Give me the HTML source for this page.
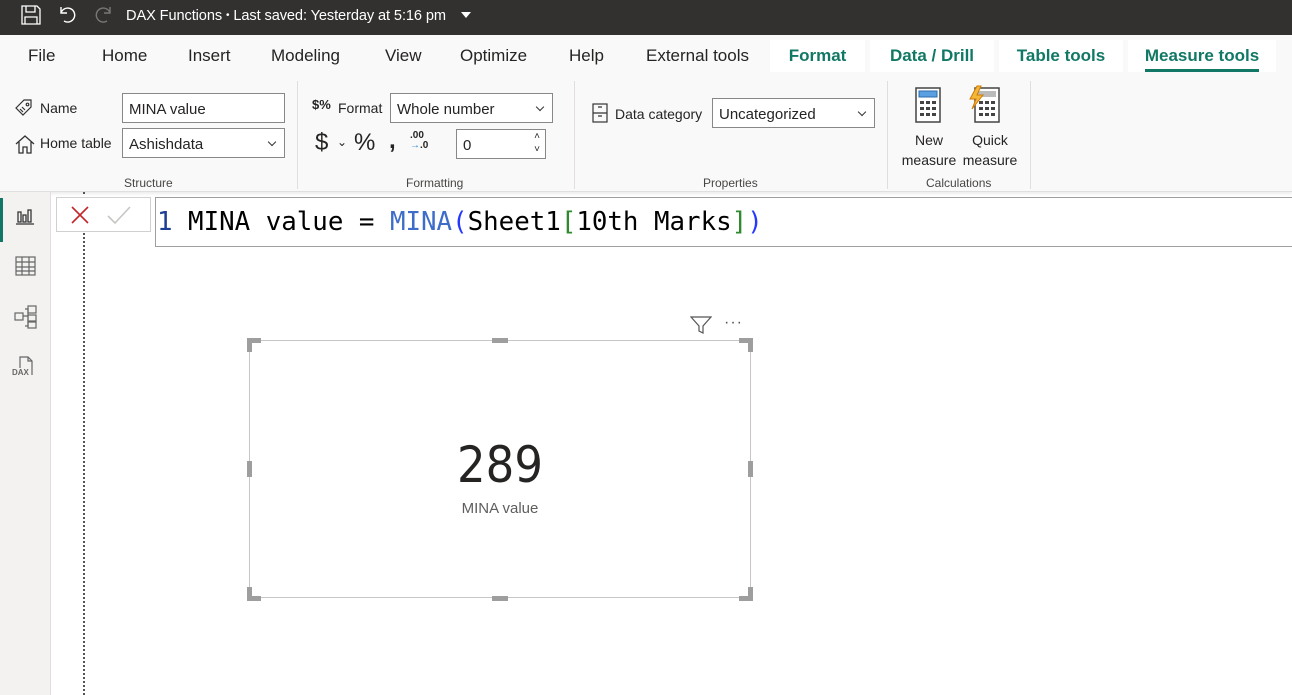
<!DOCTYPE html>
<html><head><style>
*{box-sizing:border-box;margin:0;padding:0}
body{width:1292px;height:695px;overflow:hidden;background:#fff;font-family:"Liberation Sans",sans-serif;position:relative;color:#252423}
.a{position:absolute}
.title{left:0;top:0;width:1292px;height:35px;background:#323130;color:#fff}
.tabs{left:0;top:35px;width:1292px;height:40px;background:#f9f9f9}
.tab{position:absolute;top:11px;font-size:17px;color:#252423}
.ctab{position:absolute;top:5px;height:32px;background:#fff;font-size:17px;font-weight:bold;color:#117865;padding-top:6px;text-align:center}
.ribbon{left:0;top:75px;width:1292px;height:117px;background:#f9f9f9;border-bottom:1px solid #e1dfdd;box-shadow:0 2px 3px rgba(0,0,0,.08)}
.lbl{font-size:14px;color:#252423}
.box{position:absolute;background:#fff;border:1px solid #8a8886;font-size:15px;padding:7px 6px 3px;color:#252423}
.sel::after{content:"";position:absolute;right:9px;top:10px;width:5px;height:5px;border-right:1.5px solid #333;border-bottom:1.5px solid #333;transform:rotate(45deg)}
.grp{position:absolute;top:101px;font-size:12px;color:#484644}
.sep{position:absolute;top:6px;width:1px;height:108px;background:#e1dfdd}
.rail{left:0;top:192px;width:51px;height:503px;background:#f3f2f1;border-right:1px solid #e1dfdd}
.h{position:absolute;background:#9e9e9e}
</style></head><body>
<div class="a title">
<svg class="a" style="left:20px;top:4px" width="22" height="22" viewBox="0 0 22 22" fill="none" stroke="#fff" stroke-width="1.3"><path d="M2 2h15l3 3v15H2z"/><path d="M6 2v6h9V2M5 20v-7h12v7"/></svg>
<svg class="a" style="left:57px;top:4px" width="20" height="20" viewBox="0 0 20 20" fill="none" stroke="#fff" stroke-width="1.4"><path d="M4 3v6h6"/><path d="M4 9a7 7 0 1 1 3 8"/></svg>
<svg class="a" style="left:94px;top:4px" width="20" height="20" viewBox="0 0 20 20" fill="none" stroke="#777" stroke-width="1.4"><path d="M16 3v6h-6"/><path d="M16 9a7 7 0 1 0 -3 8"/></svg>
<div class="a" style="left:126px;top:8px;font-size:14.6px;letter-spacing:-0.1px">DAX Functions <span style="font-size:10px;vertical-align:2px">•</span> Last saved: Yesterday at 5:16 pm</div>
<div class="a" style="left:461px;top:12px;width:0;height:0;border-left:5px solid transparent;border-right:5px solid transparent;border-top:6px solid #fff"></div>
</div>
<div class="a tabs">
<span class="tab" style="left:28px">File</span><span class="tab" style="left:102px">Home</span><span class="tab" style="left:188px">Insert</span><span class="tab" style="left:271px">Modeling</span><span class="tab" style="left:385px">View</span><span class="tab" style="left:460px">Optimize</span><span class="tab" style="left:569px">Help</span><span class="tab" style="left:646px">External tools</span>
<div class="ctab" style="left:770px;width:95px">Format</div>
<div class="ctab" style="left:870px;width:124px">Data / Drill</div>
<div class="ctab" style="left:999px;width:124px">Table tools</div>
<div class="ctab" style="left:1128px;width:148px">Measure tools<div style="position:absolute;left:17px;right:17px;bottom:0;height:3px;background:#117865"></div></div>
</div>
<div class="a ribbon">
<svg class="a" style="left:14px;top:23px" width="20" height="20" viewBox="0 0 20 20" fill="none" stroke="#333" stroke-width="1.2"><path d="M2 10l8-8h7v7l-8 8z"/><circle cx="13.5" cy="6.5" r="1.3"/><path d="M6 11l3 3M8 9l3 3"/></svg>
<div class="a lbl" style="left:40px;top:25px">Name</div>
<div class="box" style="left:122px;top:18px;width:163px;height:30px">MINA value</div>
<svg class="a" style="left:14px;top:58px" width="22" height="22" viewBox="0 0 22 22" fill="none" stroke="#333" stroke-width="1.3"><path d="M2 11l9-8 9 8M5 9v11h4v-6h4v6h4V9"/></svg>
<div class="a lbl" style="left:40px;top:60px">Home table</div>
<div class="box sel" style="left:122px;top:53px;width:163px;height:30px">Ashishdata</div>
<div class="grp" style="left:124px">Structure</div>
<div class="sep" style="left:297px"></div>
<div class="a" style="left:312px;top:22px;font-size:13px;font-weight:bold">$%</div>
<div class="a lbl" style="left:338px;top:25px">Format</div>
<div class="box sel" style="left:390px;top:18px;width:163px;height:30px">Whole number</div>
<div class="a" style="left:315px;top:54px;font-size:24px">$</div>
<div class="a" style="left:337px;top:60px;font-size:12px">⌄</div>
<div class="a" style="left:354px;top:54px;font-size:24px">%</div>
<div class="a" style="left:389px;top:52px;font-size:24px;font-weight:bold">,</div>
<div class="a" style="left:410px;top:56px;font-size:10px;line-height:10px;font-weight:bold">.00<br><span style="color:#2b88d8">→</span>.0</div>
<div class="box" style="left:456px;top:54px;width:90px;height:30px">0<span style="position:absolute;right:5px;top:1px;font-size:10px">˄</span><span style="position:absolute;right:5px;top:14px;font-size:10px">˅</span></div>
<div class="grp" style="left:406px">Formatting</div>
<div class="sep" style="left:574px"></div>
<svg class="a" style="left:592px;top:28px" width="16" height="20" viewBox="0 0 16 20" fill="none" stroke="#333" stroke-width="1.2"><rect x="1" y="1" width="14" height="18"/><path d="M1 10h14M6 4h4M6 13h4"/></svg>
<div class="a lbl" style="left:615px;top:31px">Data category</div>
<div class="box sel" style="left:712px;top:23px;width:163px;height:30px">Uncategorized</div>
<div class="grp" style="left:703px">Properties</div>
<div class="sep" style="left:887px"></div>
<svg class="a" style="left:915px;top:12px" width="26" height="36" viewBox="0 0 26 36"><rect x="1" y="1" width="24" height="34" fill="#fff" stroke="#444" stroke-width="1.5"/><rect x="4" y="4" width="18" height="6" fill="#5aa0e0" stroke="#2b6cb0"/><g fill="#444"><rect x="5" y="14" width="4" height="3"/><rect x="11" y="14" width="4" height="3"/><rect x="17" y="14" width="4" height="3"/><rect x="5" y="20" width="4" height="3"/><rect x="11" y="20" width="4" height="3"/><rect x="17" y="20" width="4" height="3"/><rect x="5" y="26" width="4" height="3"/><rect x="11" y="26" width="4" height="3"/><rect x="17" y="26" width="4" height="3"/></g></svg>
<svg class="a" style="left:968px;top:10px" width="34" height="38" viewBox="0 0 34 38"><rect x="7" y="3" width="24" height="34" fill="#fff" stroke="#444" stroke-width="1.5"/><rect x="10" y="6" width="18" height="6" fill="#bbb"/><g fill="#444"><rect x="11" y="16" width="4" height="3"/><rect x="17" y="16" width="4" height="3"/><rect x="23" y="16" width="4" height="3"/><rect x="11" y="22" width="4" height="3"/><rect x="17" y="22" width="4" height="3"/><rect x="23" y="22" width="4" height="3"/><rect x="11" y="28" width="4" height="3"/><rect x="17" y="28" width="4" height="3"/><rect x="23" y="28" width="4" height="3"/></g><path d="M9 1L2 14h6l-4 10 11-14H9l4-9z" fill="#f4b73a" stroke="#d07b00"/></svg>
<div class="a" style="left:900px;top:55px;font-size:14px;text-align:center;width:58px;line-height:20px">New<br>measure</div>
<div class="a" style="left:960px;top:55px;font-size:14px;text-align:center;width:60px;line-height:20px">Quick<br>measure</div>
<div class="grp" style="left:926px">Calculations</div>
<div class="sep" style="left:1030px"></div>
</div>
<div class="a rail">
<div class="a" style="left:0;top:6px;width:3px;height:44px;background:#117865"></div>
<svg class="a" style="left:15px;top:14px" width="20" height="20" viewBox="0 0 20 20" fill="none" stroke="#333" stroke-width="1.3"><path d="M1 18h18M3 6v10h3V6zM8 9v7h3V9zM13 4v12h3V4z"/></svg>
<svg class="a" style="left:15px;top:64px" width="21" height="20" viewBox="0 0 21 20" fill="none" stroke="#666" stroke-width="1.2"><rect x="1" y="1" width="19" height="18"/><path d="M1 6h19M1 11h19M1 15h19M7 1v18M14 1v18"/></svg>
<svg class="a" style="left:14px;top:113px" width="24" height="24" viewBox="0 0 24 24" fill="none" stroke="#666" stroke-width="1.2"><rect x="1" y="8" width="8" height="7"/><rect x="14" y="1" width="8" height="7"/><rect x="14" y="10" width="8" height="6"/><rect x="14" y="17" width="8" height="6"/><path d="M9 11h5M11 4h3v17h-3"/></svg>
<svg class="a" style="left:12px;top:164px" width="26" height="24" viewBox="0 0 26 24" fill="none" stroke="#666" stroke-width="1.2"><path d="M8 12V1h8l4 4v14"/><path d="M16 1v4h4"/></svg>
<div class="a" style="left:12px;top:176px;font-size:8px;color:#666;font-weight:bold">DAX</div>
</div>
<div class="a" style="left:83px;top:192px;height:503px;border-left:2px dotted #555"></div>
<div class="a" style="left:56px;top:197px;width:95px;height:35px;border:1px solid #d2d0ce;background:#fff"></div>
<svg class="a" style="left:70px;top:205px" width="20" height="20" viewBox="0 0 20 20" stroke="#c4262e" stroke-width="1.6"><path d="M2 2l16 16M18 2L2 18"/></svg>
<svg class="a" style="left:106px;top:205px" width="26" height="20" viewBox="0 0 26 20" fill="none" stroke="#c8c6c4" stroke-width="1.6"><path d="M2 11l7 7L24 2"/></svg>
<div class="a" style="left:155px;top:197px;width:1137px;height:50px;border:1px solid #a19f9d;border-right:none;background:#fff"></div>
<div class="a" style="left:157px;top:207px;font-family:'DejaVu Sans Mono','Liberation Mono',monospace;font-size:25.8px;white-space:pre;color:#000"><span style="color:#1c3f94">1</span> MINA value = <span style="color:#3d6dc8">MINA</span><span style="color:#2638ff">(</span>Sheet1<span style="color:#2d8a2d">[</span>10th Marks<span style="color:#2d8a2d">]</span><span style="color:#2638ff">)</span></div>
<svg class="a" style="left:690px;top:316px" width="22" height="18" viewBox="0 0 22 18" fill="none" stroke="#555" stroke-width="1.2"><path d="M1 1h20l-8 9v7l-4-2v-5z"/></svg>
<div class="a" style="left:724px;top:314px;font-size:16px;color:#555;letter-spacing:1px">···</div>
<div class="a" style="left:249px;top:340px;width:502px;height:258px;border:1.5px solid #c8c6c4"></div>
<div class="h" style="left:247px;top:338px;width:14px;height:5px"></div><div class="h" style="left:247px;top:338px;width:5px;height:14px"></div>
<div class="h" style="left:739px;top:338px;width:14px;height:5px"></div><div class="h" style="left:748px;top:338px;width:5px;height:14px"></div>
<div class="h" style="left:247px;top:596px;width:14px;height:5px"></div><div class="h" style="left:247px;top:587px;width:5px;height:14px"></div>
<div class="h" style="left:739px;top:596px;width:14px;height:5px"></div><div class="h" style="left:748px;top:587px;width:5px;height:14px"></div>
<div class="h" style="left:492px;top:338px;width:16px;height:5px"></div><div class="h" style="left:492px;top:596px;width:16px;height:5px"></div>
<div class="h" style="left:247px;top:461px;width:5px;height:16px"></div><div class="h" style="left:748px;top:461px;width:5px;height:16px"></div>
<div class="a" style="left:400px;top:436px;width:200px;text-align:center;font-family:'DejaVu Sans',sans-serif;font-size:50px;color:#252423;transform:scaleX(0.9)">289</div>
<div class="a" style="left:400px;top:500px;width:200px;text-align:center;font-size:15px;color:#605e5c">MINA value</div>
</body></html>
